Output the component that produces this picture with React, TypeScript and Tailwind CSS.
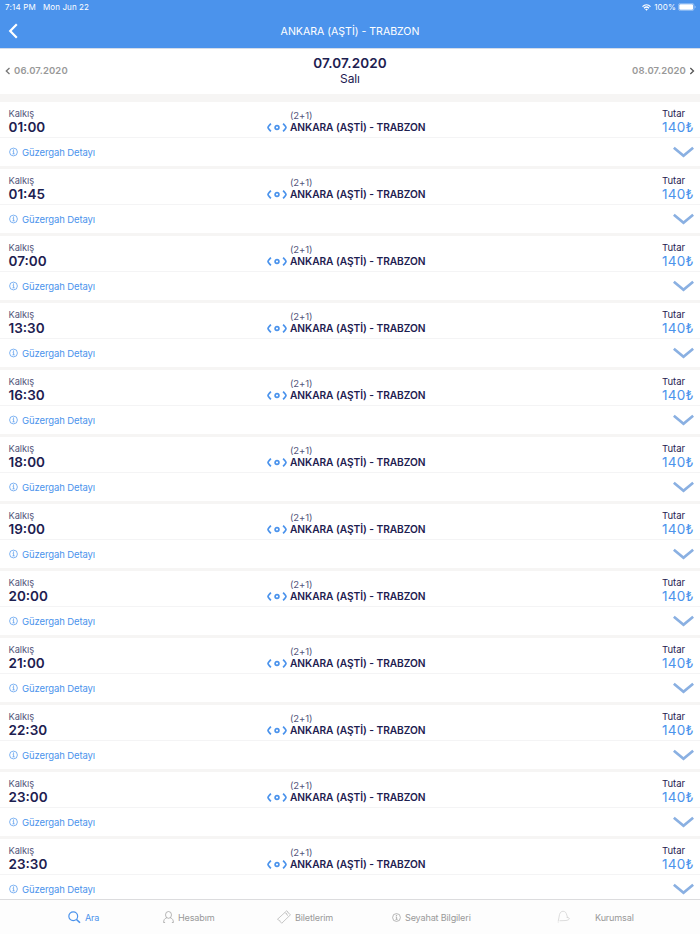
const DEPARTURES = [
  "01:00",
  "01:45",
  "07:00",
  "13:30",
  "16:30",
  "18:00",
  "19:00",
  "20:00",
  "21:00",
  "22:30",
  "23:00",
  "23:30",
];

const ROUTE = "ANKARA (AŞTİ) - TRABZON";

function InfoIcon({ className }: { className?: string }) {
  return (
    <svg className={className} viewBox="0 0 18 18" fill="none" stroke="currentColor" strokeWidth="1.4">
      <circle cx="9" cy="9" r="7.8" />
      <path d="M7.4 8h1.8v4.6M7 12.7h4.3" />
      <circle cx="9" cy="5.2" r="0.6" fill="currentColor" />
    </svg>
  );
}

function StatusBar() {
  return (
    <div className="flex h-[14px] items-center justify-between pl-[5px] pr-1 text-[8px] leading-[14px] tracking-[0.1px]">
      <div className="flex gap-[7px]">
        <span className="tracking-[0.2px]">7:14 PM</span>
        <span>Mon Jun 22</span>
      </div>
      <div className="flex items-center">
        <svg className="mr-[3px] h-[7px] w-[9px]" viewBox="0 0 18 14" fill="none" stroke="currentColor" strokeWidth="2.6">
          <path d="M1 5.2c4.6-4.4 11.4-4.4 16 0M4 8.4c2.9-2.7 7.1-2.7 10 0" />
          <path d="M9 13.6 6.2 10.7c1.6-1.4 4-1.4 5.6 0z" fill="currentColor" stroke="none" />
        </svg>
        <span className="tracking-[0.15px]">100%</span>
        <svg className="ml-[2px] h-2 w-[18px]" viewBox="0 0 18 8">
          <rect x="0.4" y="0.4" width="15.6" height="7.2" rx="2" fill="none" stroke="#fff" strokeOpacity="0.5" strokeWidth="0.7" />
          <rect x="1.3" y="1.2" width="13.8" height="5.6" rx="1.2" fill="#fff" />
          <path d="M16.8 2.8v2.4q.9-.4.9-1.2t-.9-1.2" fill="#fff" fillOpacity="0.5" />
        </svg>
      </div>
    </div>
  );
}

function Header() {
  return (
    <header className="h-12 shrink-0 bg-[#4b93ec] text-white">
      <StatusBar />
      <div className="grid h-[34px] grid-cols-[40px_1fr_40px] items-center">
        <svg className="ml-2 h-4 w-[10px]" viewBox="0 0 10 16" fill="none" stroke="currentColor" strokeWidth="2.2">
          <path d="M8.8 1.2 2.2 8l6.6 6.8" />
        </svg>
        <h1 className="pt-[2px] text-center text-[10.6px] leading-4 tracking-[-0.03px]">{ROUTE}</h1>
      </div>
    </header>
  );
}

function DateBar() {
  return (
    <div className="grid h-[46px] shrink-0 grid-cols-3 items-center border-t border-[#d3dcea] pb-px pl-[5px] pr-[5px] text-[#999]">
      <div className="flex items-center gap-[3px] pb-px">
        <svg className="h-[8px] w-[6px]" viewBox="0 0 6 8" fill="none" stroke="#777" strokeWidth="1.3">
          <path d="M4.5 1 1.3 4l3.2 3" />
        </svg>
        <span className="text-[9.5px] leading-4 font-semibold tracking-[0.12px]">06.07.2020</span>
      </div>
      <div className="text-center text-[#1d2050]">
        <div className="text-[13.5px] leading-4 font-semibold tracking-[0.1px]">07.07.2020</div>
        <div className="text-[12px] leading-4 tracking-[-0.1px]">Salı</div>
      </div>
      <div className="flex items-center justify-end gap-[3px] pb-px">
        <span className="text-[9.5px] leading-4 font-semibold tracking-[0.12px]">08.07.2020</span>
        <svg className="h-[8px] w-[6px]" viewBox="0 0 6 8" fill="none" stroke="#555" strokeWidth="1.3">
          <path d="M1.3 1l3.2 3-3.2 3" />
        </svg>
      </div>
    </div>
  );
}

function TripCard({ time }: { time: string }) {
  return (
    <div className="h-16 shrink-0 bg-white">
      <div className="grid h-9 grid-cols-[267px_1fr_38px] border-b border-[#f4f4f5] text-[#1d2050]">
        <div className="pt-[5px] pl-[8.5px]">
          <div className="text-[9.3px] leading-[13px] tracking-[-0.05px] text-[#53557a]">Kalkış</div>
          <div className="text-[13.5px] leading-[14px] font-semibold">{time}</div>
        </div>
        <div className="flex items-end">
          <svg className="mr-[2px] mb-[5px] h-[9px] w-[21px]" viewBox="0 0 21 9" fill="none" stroke="#4b93ec" strokeWidth="1.7">
            <path d="M3.9 .7Q1 3.7 1 4.5t2.9 3.8M16.1 .7Q19 3.7 19 4.5t-2.9 3.8" />
            <circle cx="10" cy="4.5" r="1.9" />
          </svg>
          <div className="pb-[3px]">
            <div className="text-[9.5px] leading-[11px] tracking-[-0.1px] text-[#53557a]">(2+1)</div>
            <div className="text-[10.2px] leading-[13px] font-semibold tracking-[-0.06px]">{ROUTE}</div>
          </div>
        </div>
        <div className="pt-[5px]">
          <div className="text-[9.5px] leading-[13px]">Tutar</div>
          <div className="text-[13.5px] leading-[14px] tracking-[0.25px] text-[#4b93ec]">140₺</div>
        </div>
      </div>
      <div className="flex h-7 items-center justify-between pr-[6px] pl-[9px] text-[#4b93ec]">
        <div className="flex items-center gap-[4px]">
          <InfoIcon className="h-[10px] w-[9px]" />
          <span className="pt-px text-[9.5px] leading-4 tracking-[-0.11px]">Güzergah Detayı</span>
        </div>
        <svg className="h-[12px] w-[21px]" viewBox="0 0 21 12" fill="none" stroke="#8ab0e2" strokeWidth="2.8">
          <path d="M0.8 1.7 10.5 9.8l9.7-8.1" />
        </svg>
      </div>
    </div>
  );
}

function TabBar() {
  return (
    <nav className="grid h-[35px] shrink-0 grid-cols-[68px_95px_114px_115px_165px_1fr] border-t border-[#dcdcde] bg-[#fdfdfd] text-[9.1px] leading-[35px] tracking-[-0.17px] text-[#999]">
      <div />
      <div className="flex items-center gap-[4px] text-[#4b93ec]">
        <svg className="h-[13px] w-[13px]" viewBox="0 0 26 26" fill="none" stroke="currentColor" strokeWidth="2.4">
          <circle cx="10.5" cy="10.5" r="8.8" />
          <path d="m17 17 7 6.5" strokeWidth="3.4" />
        </svg>
        <span>Ara</span>
      </div>
      <div className="flex items-center gap-[4px]">
        <svg className="h-[12px] w-[11px] -translate-y-px" viewBox="1 0 22 24" fill="none" stroke="currentColor" strokeWidth="1.4">
          <ellipse cx="12" cy="7.8" rx="6" ry="6.8" />
          <path d="M8.5 13.6C4 15 2.3 18 2.2 23h3M15.5 13.6c4.5 1.4 6.2 4.4 6.3 9.4h-3" />
        </svg>
        <span>Hesabım</span>
      </div>
      <div className="flex items-center gap-[4px]">
        <svg className="h-[14px] w-[14px] -translate-y-px" viewBox="0 0 28 28" fill="none" stroke="#aaa" strokeWidth="1.3">
          <path d="M19.5 1.5 22 4q-1 2.5 1.5 2.5L27 9.5 9.5 26.5 6.5 23.5q.5-2.5-2-2.5L1 18.5z" />
          <path d="m15.5 5.5 7.5 7.5" strokeDasharray="2 1.5" />
          <path d="M17.5 5.5 21 9" />
        </svg>
        <span>Biletlerim</span>
      </div>
      <div className="flex items-center gap-[4px]">
        <InfoIcon className="h-[9px] w-[9px]" />
        <span>Seyahat Bilgileri</span>
      </div>
      <div className="flex items-center gap-[25px]">
        <svg className="h-[14px] w-[13px] -translate-y-px" viewBox="0 0 26 28" fill="none" stroke="#d2d2d2" strokeWidth="1.5">
          <path d="M2.5 22C4 18 3.5 14 5 9c1.5-4.5 4-6.5 7-6.5 4.5 0 6.5 3 7.5 7.5.5 3 2 5 3.5 6.5" />
          <path d="M19 14.5q5 .5 6 3-2 3-7 3.5l-13 .5" />
          <path d="M2.5 22v4" strokeOpacity="0.5" />
        </svg>
        <span>Kurumsal</span>
      </div>
    </nav>
  );
}

export default function App() {
  return (
    <div className="flex h-[934px] w-[700px] flex-col overflow-hidden bg-white font-['Inter','Liberation_Sans',sans-serif]">
      <Header />
      <DateBar />
      <main className="flex min-h-0 flex-1 flex-col gap-[3px] overflow-hidden bg-[#f6f5f4] pt-2">
        {DEPARTURES.map((time) => (
          <TripCard key={time} time={time} />
        ))}
      </main>
      <TabBar />
    </div>
  );
}
